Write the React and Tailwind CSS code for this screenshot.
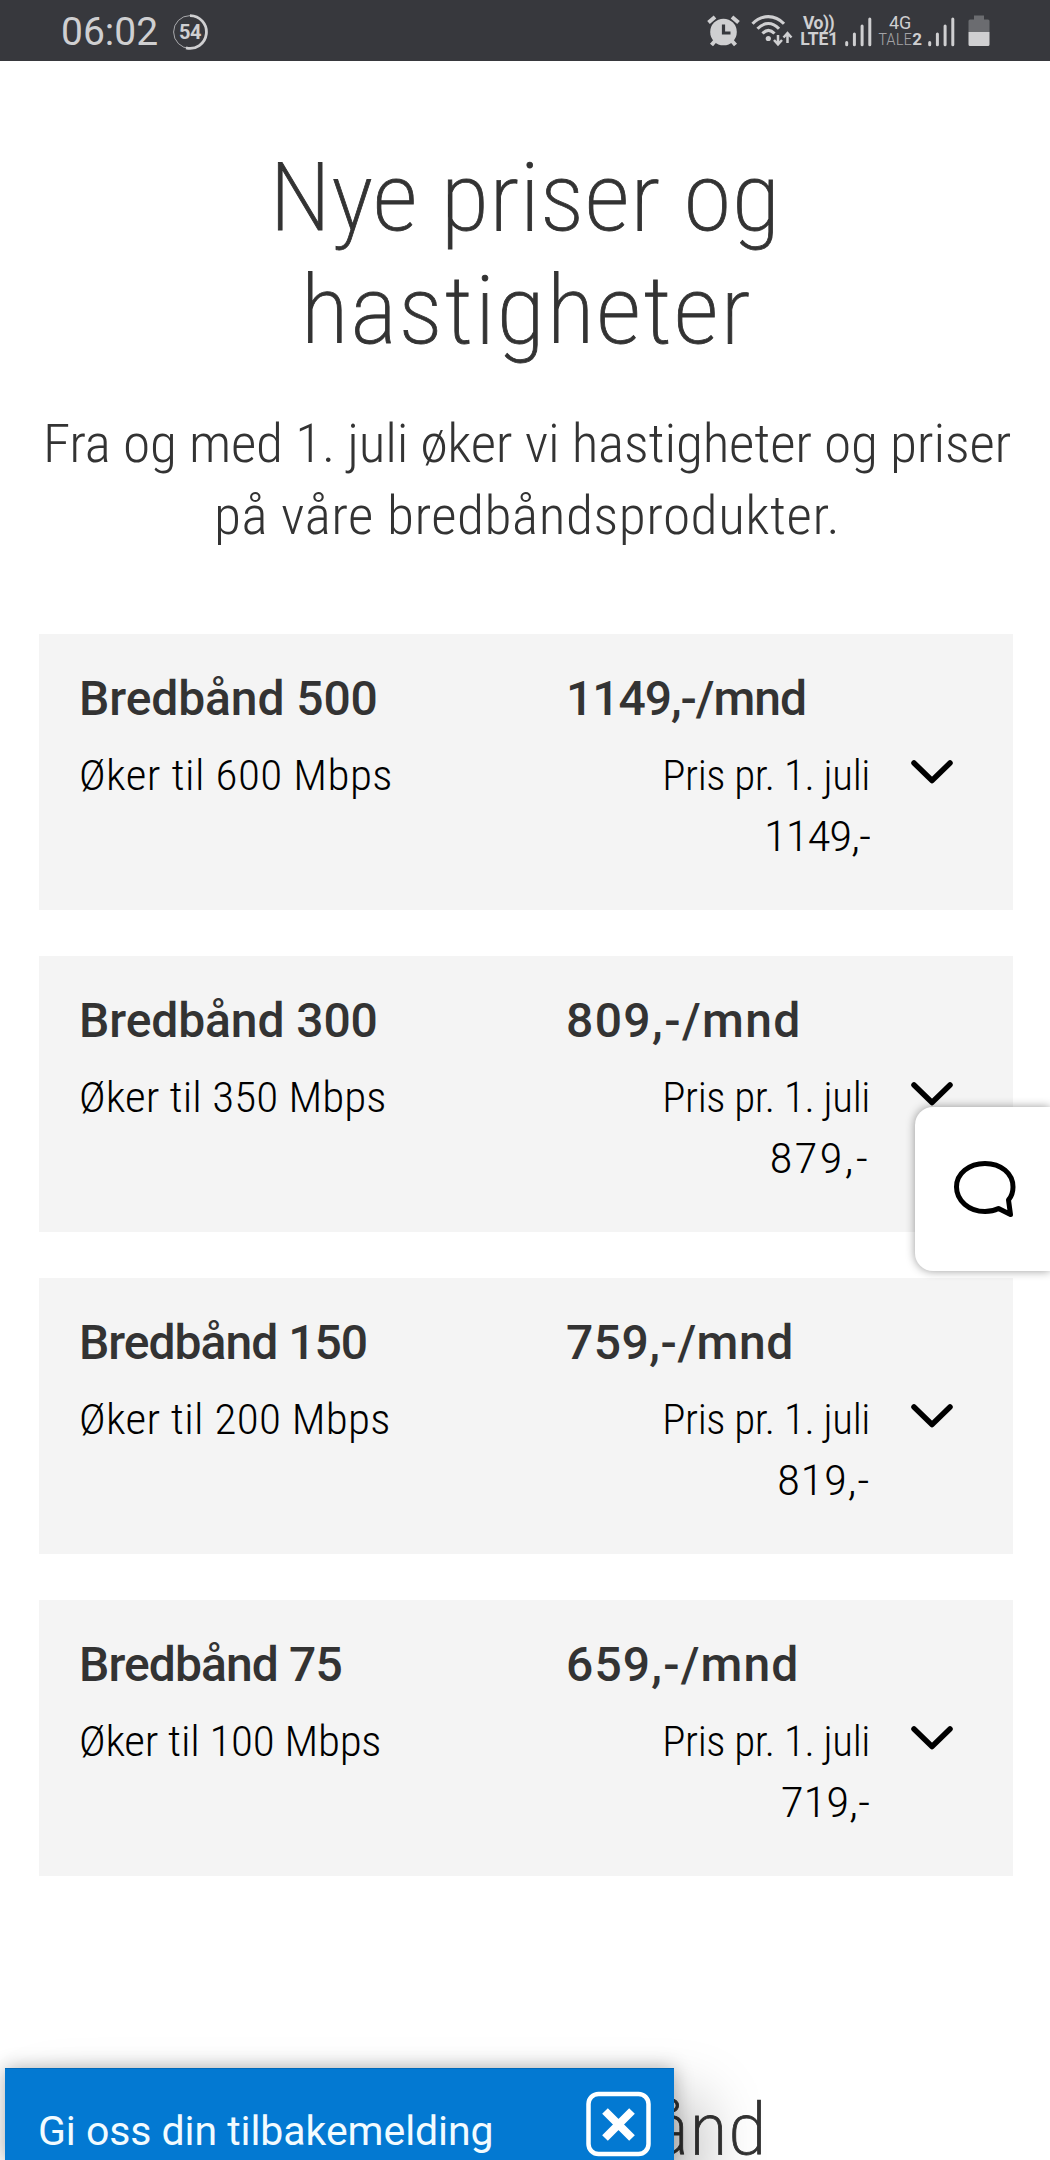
import React from 'react';

const plans = [
  {
    name: 'Bredbånd 500',
    nameTracking: 'tracking-[-0.1px]',
    speed: 'Øker til 600 Mbps',
    speedTracking: 'tracking-[0.41px]',
    price: '1149,-/mnd',
    priceTracking: 'tracking-[-1.05px]',
    newPrice: '1149,-',
    newPriceTracking: 'tracking-[-1.1px]',
  },
  {
    name: 'Bredbånd 300',
    nameTracking: 'tracking-[-0.1px]',
    speed: 'Øker til 350 Mbps',
    speedTracking: 'tracking-[0.05px]',
    price: '809,-/mnd',
    priceTracking: 'tracking-[1.4px]',
    newPrice: '879,-',
    newPriceTracking: 'tracking-[1.85px]',
  },
  {
    name: 'Bredbånd 150',
    nameTracking: 'tracking-[-1px]',
    speed: 'Øker til 200 Mbps',
    speedTracking: 'tracking-[0.29px]',
    price: '759,-/mnd',
    priceTracking: 'tracking-[0.5px]',
    newPrice: '819,-',
    newPriceTracking: 'tracking-[0.5px]',
  },
  {
    name: 'Bredbånd 75',
    nameTracking: 'tracking-[-0.9px]',
    speed: 'Øker til 100 Mbps',
    speedTracking: 'tracking-[-0.24px]',
    price: '659,-/mnd',
    priceTracking: 'tracking-[1.15px]',
    newPrice: '719,-',
    newPriceTracking: 'tracking-[-0.2px]',
  },
];

const SignalBars = () => (
  <svg width="27" height="30" viewBox="0 0 27 30" stroke="currentColor" strokeWidth="3" strokeLinecap="round">
    <path d="M1.7 25.5V27.8M9.4 17V27.8M17.1 9V27.8M24.8 2V27.8" />
  </svg>
);

const StatusBar = () => (
  <header className="flex h-[61px] items-start bg-[#37383d] pl-[61px] text-[#cfcfd1]">
    <span className="mt-[10px] text-[39px] leading-[45px]">06:02</span>
    <div className="relative ml-[15px] mt-[14px] flex h-9 w-9 items-center justify-center">
      <svg className="absolute inset-0" width="36" height="36" viewBox="0 0 36 36" fill="none" stroke="currentColor">
        <circle cx="17" cy="18" r="16.4" strokeWidth="1" opacity="0.75" />
        <path d="M17 1.6a16.4 16.4 0 1 1 -4 32.3" strokeWidth="2.8" />
      </svg>
      <span className="-ml-[2px] text-[20px] font-bold leading-none tracking-[-0.3px]">54</span>
    </div>

    <div className="ml-[498px] mt-[15px] flex items-start">
      {/* alarm */}
      <svg width="33" height="32" viewBox="0 0 33 32" fill="none" stroke="currentColor">
        <circle cx="16.5" cy="17" r="13.3" fill="currentColor" stroke="none" />
        <path d="M1.5 7.5L8 2M31.5 7.5L25 2M8 26L4.5 30M25 26l3.5 4" strokeWidth="4" />
        <path d="M16.5 9.5V18H23.5" stroke="#37383d" strokeWidth="3.2" />
      </svg>
      {/* wifi with up and down traffic */}
      <svg className="ml-[11px]" width="42" height="32" viewBox="0 0 42 32" fill="none" stroke="currentColor" strokeWidth="3.1">
        <path d="M1.5 8.800C10.5 -0.8 24 -0.8 33 8.8M6.5 13.8C13 6.8 21.5 6.8 28 13.8M11.5 18.5C15.5 14.3 19.5 14.3 23.5 18.5" />
        <circle cx="17.3" cy="23.5" r="2.6" fill="currentColor" stroke="none" />
        <path d="M27 20V29M23 25L27 29.3L31 25M36.5 28V19M32.5 22.5L36.5 18.2L40.5 22.5" strokeWidth="2.5" />
      </svg>
      <div className="ml-[7px] w-[37px] text-center font-bold leading-[16px]">
        <div className="whitespace-nowrap text-[17.5px] tracking-[-0.5px]">Vo))</div>
        <div className="text-[17.5px]">LTE1</div>
      </div>
      <div className="ml-[8px] mt-[2px]"><SignalBars /></div>
      <div className="ml-[6px] w-[44px] text-center leading-[16px]">
        <div className="text-[18px]">4G</div>
        <div className="flex justify-between whitespace-nowrap text-[17px]">
          <span className="font-light text-[#a3a3a6] [font-stretch:75%]">TALE</span>
          <span className="font-bold">2</span>
        </div>
      </div>
      <div className="ml-[6px] mt-[2px]"><SignalBars /></div>
      {/* battery */}
      <svg className="ml-[13px]" width="22" height="32" viewBox="0 0 22 32">
        <path d="M6 0.5h10v4h4a1.5 1.5 0 0 1 1.5 1.5V17H0.5V6A1.5 1.5 0 0 1 2 4.5H6z" fill="#6b6c70" />
        <path d="M0.5 17h21v12.5a1.5 1.5 0 0 1 -1.5 1.5H2a1.5 1.5 0 0 1 -1.5 -1.5z" fill="currentColor" />
      </svg>
    </div>
  </header>
);

const PlanCard = ({ plan }) => (
  <article className="flex h-[276px] bg-[#f4f4f4] pl-[40px] pt-[35px]">
    <div className="w-[487px]">
      <h3 className={`text-[48px] font-medium leading-[60px] text-[#333333] ${plan.nameTracking}`}>{plan.name}</h3>
      <p className={`mt-4 origin-left scale-x-105 text-[43px] font-light leading-[61px] text-black [font-stretch:75%] ${plan.speedTracking}`}>
        {plan.speed}
      </p>
    </div>
    <div className="w-[304px]">
      <div className={`whitespace-nowrap text-[48px] font-medium leading-[60px] text-[#333333] ${plan.priceTracking}`}>
        {plan.price}
      </div>
      <div className="mt-4 text-right text-[43px] font-light leading-[61px] text-black [font-stretch:75%]">
        <div className="tracking-[-0.42px]">Pris pr. 1. juli</div>
        <div className={`origin-right scale-x-110 ${plan.newPriceTracking}`}>{plan.newPrice}</div>
      </div>
    </div>
    <svg
      className="ml-[40px] mt-[90px]"
      width="44"
      height="26"
      viewBox="0 0 44 26"
      fill="none"
      stroke="black"
      strokeWidth="5.5"
      strokeLinecap="round"
      strokeLinejoin="round"
    >
      <path d="M4 4L22 21.5L40 4" />
    </svg>
  </article>
);

const App = () => {
  return (
    <div className="relative h-[2160px] w-[1050px] overflow-hidden bg-white font-['Roboto',sans-serif] text-[#333333]">
      <StatusBar />

      <main className="pt-20">
        <h1 className="text-center text-[95px] font-extralight leading-[113px] [-webkit-text-stroke:0.8px_#333333] [font-stretch:75%]">
          <span className="block scale-x-[1.045] tracking-[0.4px]">Nye priser og</span>
          <span className="block scale-x-[1.045] pl-[3px] tracking-[1.7px]">hastigheter</span>
        </h1>
        <p className="mt-[41px] whitespace-nowrap text-center text-[53px] font-light leading-[72px] [font-stretch:75%]">
          <span className="block scale-x-[1.045] pl-[4px] tracking-[-0.2px]">Fra og med 1. juli øker vi hastigheter og priser</span>
          <span className="block scale-x-[1.045] pl-[4px] tracking-[0.5px]">på våre bredbåndsprodukter.</span>
        </p>

        <section className="ml-[39px] mt-[82px] flex w-[974px] flex-col gap-[46px]">
          {plans.map((plan) => (
            <PlanCard key={plan.name} plan={plan} />
          ))}
        </section>

        <h2 className="mt-[209px] w-[767px] origin-right scale-x-[1.08] text-right text-[73px] font-extralight leading-[88px] tracking-[0.5px] [-webkit-text-stroke:0.8px_#333333] [font-stretch:75%]">
          ånd
        </h2>
      </main>

      {/* chat tab */}
      <button className="absolute right-0 top-[1107px] flex h-[164px] w-[135px] items-center rounded-l-[18px] bg-white pl-[38px] shadow-[0_0_10px_rgba(0,0,0,0.4)]">
        <svg width="64" height="60" viewBox="0 0 64 60" fill="none" stroke="black" strokeWidth="5" strokeLinejoin="round">
          <path d="M45.5 49.5C41.5 51.5 37 52.5 32 52.5C16 52.5 3.5 41.5 3.5 28C3.5 14.5 16 4.5 32 4.5C48 4.5 60 14.5 60 28C60 33 58.5 37.5 55.5 41L57.5 55.5Z" />
        </svg>
      </button>

      {/* feedback banner */}
      <div className="absolute bottom-0 left-[5px] flex h-[92px] w-[669px] items-start border-t border-[#0069ba] bg-[#0379d2] pl-[33px] text-[#f2fbff] shadow-[0_0_18px_rgba(0,0,0,0.3),30px_32px_60px_rgba(0,0,0,0.25)]">
        <span className="mt-[38px] whitespace-nowrap text-[41px] leading-[48px] tracking-[-0.06px]">Gi oss din tilbakemelding</span>
        <svg className="absolute left-[581px] top-[22px]" width="65" height="66" viewBox="0 0 65 66" fill="none" stroke="white">
          <rect x="2.500" y="3" width="60" height="60" rx="10" strokeWidth="4.5" />
          <path d="M19 20L46 47M46 20L19 47" strokeWidth="8" />
        </svg>
      </div>
    </div>
  );
};

export default App;
